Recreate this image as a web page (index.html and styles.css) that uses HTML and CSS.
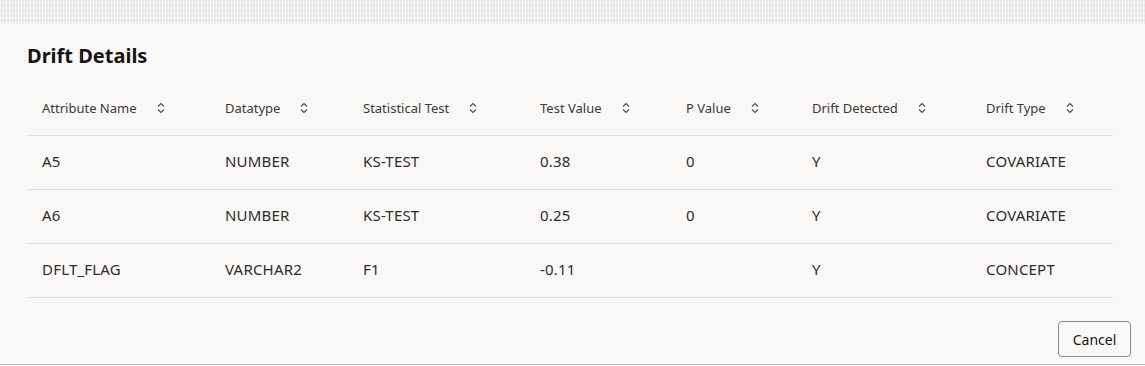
FILE: index.html
```html
<!DOCTYPE html>
<html lang="en">
<head>
<meta charset="utf-8">
<title>Drift Details</title>
<link rel="stylesheet" href="styles.css">
</head>
<body>
<div class="backdrop"></div>
<div class="dialog">
  <div class="dialog-body">
    <h1 class="title">Drift Details</h1>
    <table class="grid">
      <colgroup>
        <col class="c1"><col class="c2"><col class="c3"><col class="c4"><col class="c5"><col class="c6"><col class="c7">
      </colgroup>
      <thead>
        <tr>
          <th><span class="hd">Attribute Name<svg class="sort" viewBox="0 0 8 12"><path d="M1 4.5L4 1.5L7 4.5M1 7.5L4 10.5L7 7.5"/></svg></span></th>
          <th><span class="hd">Datatype<svg class="sort" viewBox="0 0 8 12"><path d="M1 4.5L4 1.5L7 4.5M1 7.5L4 10.5L7 7.5"/></svg></span></th>
          <th><span class="hd">Statistical Test<svg class="sort" viewBox="0 0 8 12"><path d="M1 4.5L4 1.5L7 4.5M1 7.5L4 10.5L7 7.5"/></svg></span></th>
          <th><span class="hd">Test Value<svg class="sort" viewBox="0 0 8 12"><path d="M1 4.5L4 1.5L7 4.5M1 7.5L4 10.5L7 7.5"/></svg></span></th>
          <th><span class="hd">P Value<svg class="sort" viewBox="0 0 8 12"><path d="M1 4.5L4 1.5L7 4.5M1 7.5L4 10.5L7 7.5"/></svg></span></th>
          <th><span class="hd">Drift Detected<svg class="sort" viewBox="0 0 8 12"><path d="M1 4.5L4 1.5L7 4.5M1 7.5L4 10.5L7 7.5"/></svg></span></th>
          <th><span class="hd">Drift Type<svg class="sort" viewBox="0 0 8 12"><path d="M1 4.5L4 1.5L7 4.5M1 7.5L4 10.5L7 7.5"/></svg></span></th>
        </tr>
      </thead>
      <tbody>
        <tr><td>A5</td><td>NUMBER</td><td>KS-TEST</td><td>0.38</td><td>0</td><td>Y</td><td>COVARIATE</td></tr>
        <tr><td>A6</td><td>NUMBER</td><td>KS-TEST</td><td>0.25</td><td>0</td><td>Y</td><td>COVARIATE</td></tr>
        <tr><td>DFLT_FLAG</td><td>VARCHAR2</td><td>F1</td><td>-0.11</td><td></td><td>Y</td><td>CONCEPT</td></tr>
      </tbody>
    </table>
  </div>
  <div class="dialog-footer">
    <button class="btn" type="button">Cancel</button>
  </div>
</div>
</body>
</html>
```

FILE: styles.css
```css
html, body {
  margin: 0;
  padding: 0;
}
body {
  background: #f9f8f6;
  font-family: "Noto Sans", "Open Sans", sans-serif;
  color: #161513;
  overflow: hidden;
}
.backdrop {
  height: 24px;
  background-color: #e8e7e5;
  background-image:
    repeating-linear-gradient(90deg, rgba(255,255,255,0.55) 0 1px, transparent 1px 3px),
    repeating-linear-gradient(0deg, rgba(255,255,255,0.35) 0 2px, transparent 2px 5px);
}
.dialog {
  background: #f9f8f6;
  height: 340px;
  border-bottom: 1px solid #bdbcba;
  display: flex;
  flex-direction: column;
}
.dialog-body {
  padding: 18px 32px 0 27px;
  flex: 1;
}
.title {
  margin: 0;
  font-size: 20px;
  line-height: 28px;
  font-weight: 700;
  color: #161513;
}
.grid {
  margin-top: 10px;
  width: 100%;
  border-collapse: collapse;
  table-layout: fixed;
}
.c1 { width: 183px; }
.c2 { width: 138px; }
.c3 { width: 177px; }
.c4 { width: 146px; }
.c5 { width: 126px; }
.c6 { width: 174px; }
.c7 { width: auto; }
th {
  height: 54px;
  padding: 1px 0 0 15px;
  text-align: left;
  font-weight: 400;
  font-size: 13px;
  color: #3a3936;
  vertical-align: middle;
  border-bottom: 1px solid #e2e0dd;
}
.hd {
  display: inline-flex;
  align-items: center;
  gap: 20px;
}
.sort {
  width: 8px;
  height: 12px;
  fill: none;
  stroke: #4d4b48;
  stroke-width: 1.1;
}
td {
  height: 50px;
  padding: 0 0 3px 15px;
  font-size: 15px;
  letter-spacing: 0.2px;
  color: #2e2d2b;
  vertical-align: middle;
  border-bottom: 1px solid #e2e0dd;
  white-space: nowrap;
}
.dialog-footer {
  display: flex;
  justify-content: flex-end;
  padding: 0 14px 7px 0;
}
.btn {
  height: 36px;
  width: 73px;
  border: 1px solid #8d8b88;
  border-radius: 4px;
  background: #f9f8f6;
  font-family: "Noto Sans", "Open Sans", sans-serif;
  font-size: 14px;
  color: #161513;
  padding: 0;
}
```
